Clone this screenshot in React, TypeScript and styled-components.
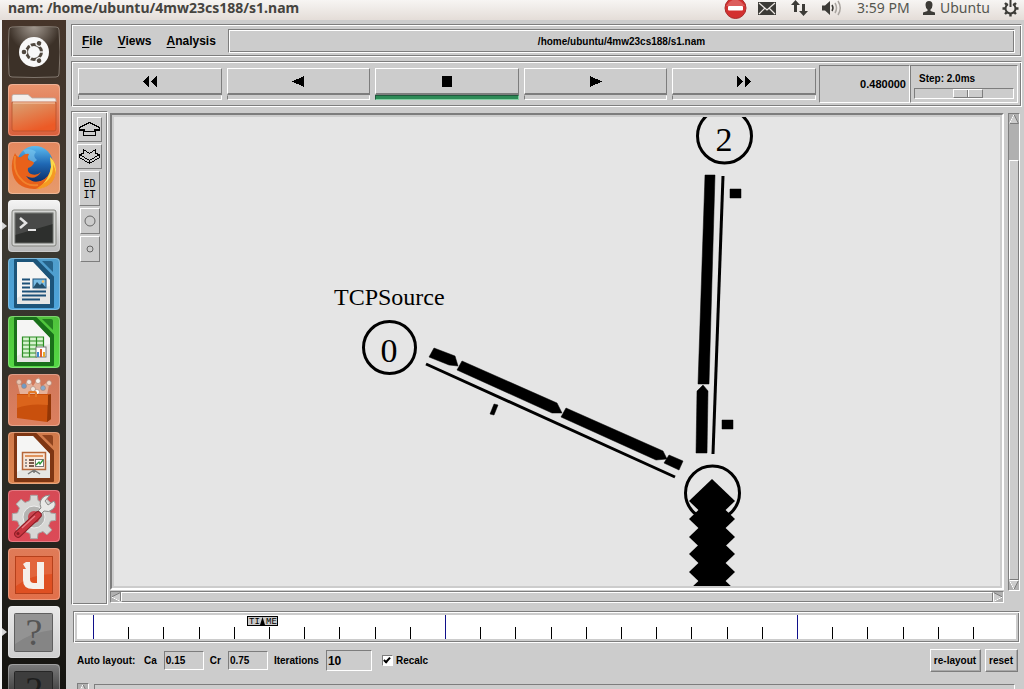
import React, { useState } from "react";
import styled, { createGlobalStyle, css } from "styled-components";

const face = "#cccccc";
const dark = "#7d7d7d";
const light = "#ffffff";

const GlobalStyle = createGlobalStyle`
  *, *::before, *::after { box-sizing: border-box; }
  body { margin: 0; background: ${face}; font-family: "Liberation Sans", Arial, sans-serif; color: #000; }
  button, input { font: inherit; color: inherit; margin: 0; padding: 0; border-radius: 0; appearance: none; background: none; border: 0; }
  svg { display: block; }
`;

const groove = css`
  border: 1px solid;
  border-color: ${dark} ${light} ${light} ${dark};
  box-shadow: inset 1px 1px 0 ${light}, inset -1px -1px 0 ${dark};
`;
const sunken = css`
  border: 1px solid;
  border-color: ${dark} ${light} ${light} ${dark};
`;
const raised = css`
  border: 1px solid;
  border-color: ${light} ${dark} ${dark} ${light};
`;

const Desktop = styled.div`
  display: flex;
  flex-direction: column;
  height: 100vh;
  overflow: hidden;
  background: ${face};
`;

const TopPanel = styled.header`
  display: flex;
  flex: 0 0 20px;
  min-height: 0;
  align-items: center;
  justify-content: space-between;
  padding: 0 5px 4px 8px;
  background: linear-gradient(#f7f5f3, #e4ddd8);
  color: #45443f;
  font-family: "Noto Sans", sans-serif;
  line-height: 16px;
`;

const WindowTitle = styled.h1`
  margin: 0;
  font-size: 14px;
  line-height: 16px;
  font-weight: 700;
  white-space: nowrap;
`;

const Indicators = styled.div`
  display: flex;
  align-items: center;
  height: 16px;
  font-size: 14px;
  color: #55564f;
`;

const Indicator = styled.div<{ $w: number }>`
  display: flex;
  align-items: center;
  gap: 4px;
  width: ${(p) => p.$w}px;
  height: 16px;
  white-space: nowrap;
`;

const Body = styled.div`
  display: flex;
  flex: 1;
  min-height: 0;
  border-left: 2px solid #f4f4f4;
`;

const Launcher = styled.nav`
  display: flex;
  flex: 0 0 64px;
  flex-direction: column;
  gap: 6px;
  padding: 6px 0 0;
  overflow: hidden;
  background: linear-gradient(#46352a, #3b3830 35%, #2c2a24 70%, #14130f);
`;

const LauncherItem = styled.button<{ $running?: boolean }>`
  display: flex;
  flex: 0 0 52px;
  align-items: center;
  &::before {
    content: "";
    width: 6px;
    border: 4px solid transparent;
    border-width: 4px 0 4px 5px;
    border-left-color: ${(p) => (p.$running ? "#d8d8d8" : "transparent")};
  }
`;

const Main = styled.main`
  display: flex;
  flex: 1;
  flex-direction: column;
  min-width: 0;
  padding: 4px 2px 0 5px;
  font-size: 10px;
  font-weight: 700;
`;

const MenuBar = styled.div`
  ${groove}
  display: flex;
  flex: 0 0 33px;
  align-items: stretch;
  padding: 4px 6px 3px 2px;
`;

const Menus = styled.nav`
  display: flex;
  flex: 0 0 154px;
  align-items: center;
  gap: 1px;
  padding-left: 1px;
`;

const MenuButton = styled.button`
  padding: 0 7px;
  font-size: 12px;
  line-height: 16px;
  &::first-letter { text-decoration: underline; text-underline-offset: 2px; }
`;

const PathBox = styled.div`
  ${groove}
  display: flex;
  flex: 1;
  align-items: center;
  justify-content: center;
`;

const Toolbar = styled.div`
  ${groove}
  display: flex;
  flex: 0 0 46px;
  margin-top: 4px;
  padding: 3px 3px 3px 6px;
`;

const Transport = styled.div`
  display: flex;
  flex: 1;
  gap: 5px;
  padding: 3px 3px 3px 0;
`;

const PlayButton = styled.button<{ $active?: boolean }>`
  display: flex;
  flex: 1;
  flex-direction: column;
  &::after {
    content: "";
    flex: 0 0 5px;
    align-self: stretch;
    border: 1px solid;
    border-color: ${(p) => (p.$active ? "#1e5a3c #86cfa4 #86cfa4 #1e5a3c" : `${face} ${light} ${light} ${dark}`)};
    background: ${(p) => (p.$active ? "#2e8b57" : face)};
  }
`;

const PlayFace = styled.span`
  ${raised}
  display: flex;
  flex: 1;
  align-self: stretch;
  align-items: center;
  justify-content: center;
  border-bottom-width: 2px;
`;

const TimeBox = styled.output`
  ${sunken}
  display: flex;
  flex: 0 0 91px;
  align-items: center;
  justify-content: flex-end;
  padding-right: 3px;
  font-size: 11px;
`;

const StepBox = styled.label`
  ${sunken}
  display: flex;
  flex: 0 0 108px;
  flex-direction: column;
  padding: 7px 3px 0;
  line-height: 12px;
  span { padding-left: 5px; }
`;

const StepSlider = styled.input`
  ${sunken}
  width: 100%;
  height: 11px;
  margin-top: 3px;
  &::-webkit-slider-thumb {
    appearance: none;
    width: 30px;
    height: 9px;
    border: 1px solid;
    border-color: ${light} ${dark} ${dark} ${light};
    background: linear-gradient(90deg, ${face} 13px, ${dark} 13px 14px, ${light} 14px 15px, ${face} 15px);
  }
`;

const Workspace = styled.div`
  display: flex;
  flex: 1;
  min-height: 0;
  margin-top: 4px;
`;

const ToolPalette = styled.div`
  ${groove}
  display: flex;
  flex: 0 0 37px;
  flex-direction: column;
  align-items: center;
  gap: 2px;
  padding-top: 5px;
`;

const Tool = styled.button<{ $w: number; $h: number }>`
  ${raised}
  display: flex;
  align-items: center;
  justify-content: center;
  width: ${(p) => p.$w}px;
  height: ${(p) => p.$h}px;
  font-family: "DejaVu Sans Mono", monospace;
  font-size: 10px;
  font-weight: 400;
  line-height: 11px;
  white-space: pre;
`;

const ViewColumn = styled.div`
  display: flex;
  flex: 1;
  flex-direction: column;
  gap: 1px;
  min-width: 0;
  padding: 2px 4px 2px 2px;
`;

const CanvasFrame = styled.div`
  flex: 1;
  min-height: 0;
  padding: 2px;
  border: 2px solid;
  border-color: ${dark} ${light} ${light} ${dark};
`;

const Scene = styled.svg`
  width: 100%;
  height: 100%;
  background: #e5e5e5;
  font-family: "Liberation Serif", "Times New Roman", serif;
  font-weight: 400;
`;

const ScrollBar = styled.div<{ $vertical?: boolean }>`
  ${sunken}
  display: flex;
  flex: 0 0 12px;
  flex-direction: ${(p) => (p.$vertical ? "column" : "row")};
  margin: ${(p) => (p.$vertical ? "2px 2px 14px 0" : "0")};
  background: #b0b0b0;
`;

const ScrollArrow = styled.button`
  flex: 0 0 10px;
`;

const ScrollThumb = styled.div<{ $size: number }>`
  ${raised}
  flex: ${(p) => p.$size};
  background: ${face};
`;

const Trough = styled.div`
  flex: 8;
`;

const Timeline = styled.div`
  ${groove}
  flex: 0 0 32px;
  margin: 6px 2px 0;
  padding: 3px;
`;

const TimeScale = styled.svg`
  width: 100%;
  height: 24px;
  background: #fff;
  font-family: "Liberation Mono", monospace;
  font-weight: 400;
`;

const LayoutForm = styled.form`
  display: flex;
  flex: 0 0 40px;
  align-items: center;
  padding: 0 4px 5px 6px;
  line-height: 12px;
`;

const FormTitle = styled.span`
  width: 67px;
`;

const Field = styled.label`
  display: flex;
  align-items: center;
  gap: 7px;
  margin-right: 6px;
`;

const Entry = styled.input<{ $large?: boolean }>`
  ${sunken}
  width: ${(p) => (p.$large ? 46 : 40)}px;
  height: ${(p) => (p.$large ? 21 : 19)}px;
  padding-left: 1px;
  font-size: ${(p) => (p.$large ? 12 : 10)}px;
`;

const Recalc = styled.label`
  display: flex;
  align-items: center;
  gap: 3px;
  margin-left: 4px;
`;

const Tick = styled.input`
  ${sunken}
  display: grid;
  place-items: center;
  width: 11px;
  height: 11px;
  background: #fff;
  &:checked::after {
    content: "";
    width: 4px;
    height: 7px;
    border: solid #000;
    border-width: 0 2px 2px 0;
    transform: rotate(42deg);
    margin-bottom: 2px;
  }
`;

const FormActions = styled.div`
  display: flex;
  gap: 4px;
  margin-left: auto;
`;

const FormButton = styled.button`
  ${raised}
  height: 23px;
  padding: 0 4px 0 3px;
  box-shadow: inset -1px -1px 0 #a8a8a8;
`;

const Footer = styled.div`
  display: flex;
  flex: 0 0 6px;
  align-items: flex-start;
  gap: 5px;
  padding: 0 7px 0 6px;
  overflow: hidden;
`;

const FooterArrow = styled.button`
  ${sunken}
  width: 12px;
  height: 12px;
  background: #b0b0b0;
`;

const FooterPane = styled.div`
  ${sunken}
  flex: 1;
  height: 20px;
  margin-top: 1px;
`;

function Triangle({ dir }: { dir: "up" | "down" | "left" | "right" }) {
  const turn = { up: 0, right: 90, down: 180, left: 270 }[dir];
  const flip = dir === "right" || dir === "down";
  return (
    <svg width="10" height="10" viewBox="0 0 10 10">
      <g transform={`rotate(${turn} 5 5)`} fill="none">
        <path d="M5 0.5 L9.5 9.5 H0.5 Z" fill={face} stroke={dark} />
        <path d={flip ? "M5 0.5 L9.5 9.5 H0.5" : "M0.5 9.5 L5 0.5"} stroke={light} />
      </g>
    </svg>
  );
}

const tile = (id: string, top: string, bottom: string) => (
  <>
    <defs>
      <linearGradient id={id} x2="0" y2="1">
        <stop offset="0" stopColor={top} />
        <stop offset="1" stopColor={bottom} />
      </linearGradient>
    </defs>
    <rect width="52" height="52" rx="4" fill={`url(#${id})`} />
    <rect x="0.5" y="0.5" width="51" height="51" rx="4" fill="none" stroke="#fff" strokeOpacity="0.28" />
  </>
);

function DocShape({ edge }: { edge: string }) {
  return (
    <>
      <path d="M7 2 H28 L45 19 V49 H7 Z" fill={edge} stroke={edge} strokeWidth="2" strokeLinejoin="round" />
      <path d="M34 3 H43 Q45 3 45 5 V14 Z" fill={edge} opacity="0.8" />
      <path d="M9 4 H25 L42 22 V46 H9 Z" fill="#e6e6e4" />
      <path d="M9 4 H25 L42 22 V28 Q26 30 9 40 Z" fill="#fff" opacity="0.6" />
    </>
  );
}

const gearPath = (cx: number, cy: number, outer: number, inner: number, teeth: number) => {
  const pts: string[] = [];
  for (let i = 0; i < teeth; i++) {
    [[-0.3, inner], [-0.2, outer], [0.2, outer], [0.3, inner]].forEach(([o, r]) => {
      const a = ((i + o) / teeth) * Math.PI * 2 - Math.PI / 2;
      pts.push(`${(cx + r * Math.cos(a)).toFixed(1)} ${(cy + r * Math.sin(a)).toFixed(1)}`);
    });
  }
  return `M${pts.join("L")}Z`;
};

const launcherIcons: { name: string; running?: boolean; art: React.ReactNode }[] = [
  {
    name: "Dash",
    art: (
      <>
        <defs>
          <radialGradient id="dash" cy="0"><stop offset="0" stopColor="#a39a91" /><stop offset="1" stopColor="#3c3128" /></radialGradient>
        </defs>
        <path d="M4 1 Q26 -1 48 1 Q51 1 51 4 Q53 26 51 48 Q51 51 48 51 Q26 52 4 51 Q1 51 1 48 Q-1 26 1 4 Q1 1 4 1Z" fill="url(#dash)" stroke="#81776e" />
        <circle cx="26" cy="26" r="15" fill="#f8f8f8" />
        <circle cx="26" cy="26" r="7.5" fill="none" stroke="#50483f" strokeWidth="3" />
        {[0, 120, 240].map((a) => (
          <path key={a} d="M31 26 H36" stroke="#f8f8f8" strokeWidth="1.4" transform={`rotate(${a} 26 26)`} />
        ))}
        {[180, 300, 60].map((a) => (
          <g key={a} transform={`rotate(${a} 26 26)`}>
            <circle cx="36" cy="26" r="3.4" fill="#f8f8f8" />
            <circle cx="36" cy="26" r="2.3" fill="#50483f" />
          </g>
        ))}
      </>
    ),
  },
  {
    name: "Files",
    art: (
      <>
        {tile("files", "#e8946e", "#d95f3b")}
        <path d="M4 19 V12 Q4 10.5 6 10.5 H20 L24 14 H46 Q48 14 48 16 V19 Z" fill="#f3efec" stroke="#b9aaa2" strokeWidth="0.8" />
        <defs><linearGradient id="folder" x2="0.5" y2="1"><stop offset="0" stopColor="#d9a375" /><stop offset="1" stopColor="#ec5a26" /></linearGradient></defs>
        <path d="M4 18 H48 V45 Q48 47 46 47 H6 Q4 47 4 45 Z" fill="url(#folder)" stroke="#b9502c" strokeWidth="0.8" />
        <path d="M5 19 H47" stroke="#f9cbae" />
      </>
    ),
  },
  {
    name: "Firefox",
    art: (
      <>
        {tile("ff", "#e3885e", "#e79a6c")}
        <defs><linearGradient id="globe" x2="0" y2="1"><stop offset="0" stopColor="#5cbcf0" /><stop offset="0.5" stopColor="#1f68b4" /><stop offset="1" stopColor="#0d2f68" /></linearGradient></defs>
        <circle cx="27" cy="22" r="18" fill="url(#globe)" />
        <path d="M15 8 Q24 6 28 10 Q24 14 29 18 L24 22 Z" fill="#84cdf2" opacity="0.55" />
        <path d="M7 11 Q9 16 13 15 Q17 11 21 12 Q19 15 20 18 Q25 19 26 21 Q24 25 20 26 Q19 30 23 32 Q29 34 33 30 Q27 39 18 34 Q24 42 33 39 Q42 35 43 25 Q44 20 42 15 Q48 20 48 28 Q46 47 26 47 Q6 46 4 28 Q3 19 7 11Z" fill="#e8611a" />
        <path d="M42 15 Q48 20 48 28 Q46 44 30 47 Q41 38 43 25Z" fill="#fbd84a" />
        <path d="M39 39 Q46 33 45 22 Q50 31 44 40 Q37 47 28 47Z" fill="#f59a23" />
        <path d="M7 14 Q5 29 12 36 Q19 45 30 43" fill="none" stroke="#f79a3b" strokeWidth="2" opacity="0.6" />
      </>
    ),
  },
  {
    name: "Terminal",
    running: true,
    art: (
      <>
        {tile("term", "#f4f4f4", "#b9b9b9")}
        <rect x="4" y="10" width="44" height="36" rx="2" fill="#d3d4d2" stroke="#83847f" />
        <rect x="7" y="13" width="38" height="30" fill="#2d2f2d" stroke="#676965" />
        <path d="M7 13 H45 V24 L7 35 Z" fill="#fff" opacity="0.13" />
        <path d="M12 18 L18 23 L12 28" fill="none" stroke="#e4e4e4" strokeWidth="2.5" />
        <path d="M20 30 H28" stroke="#e4e4e4" strokeWidth="2" />
      </>
    ),
  },
  {
    name: "Writer",
    art: (
      <>
        {tile("writer", "#4f9dcb", "#4da4db")}
        <DocShape edge="#1c5479" />
        <path d="M14 21.5 H22 M14 25.5 H22 M14 29.5 H22 M14 33.5 H38 M14 37.5 H38 M14 41.5 H32" stroke="#1d5178" strokeWidth="2" />
        <rect x="25" y="21" width="13" height="9" fill="#79bce4" stroke="#1d5178" />
        <path d="M25 30 L29 24 L32 27 L34 25 L38 30Z" fill="#25516d" />
        <circle cx="35" cy="23.5" r="1.3" fill="#f7c26a" />
      </>
    ),
  },
  {
    name: "Calc",
    art: (
      <>
        {tile("calc", "#4fc23b", "#54d844")}
        <DocShape edge="#19701a" />
        <rect x="14" y="21" width="22" height="20" fill="#d6f3cf" />
        <path d="M14.5 20.5 V41 M21.5 20.5 V41 M28.5 20.5 V41 M35.5 20.5 V32 M14 21 H36 M14 25 H36 M14 29 H36 M14 33 H29 M14 37 H29 M14 41 H29" stroke="#2b8d23" strokeWidth="1.2" />
        <rect x="28" y="31" width="10" height="10" fill="#fff" stroke="#777" />
        <path d="M30 36 V41" stroke="#3c8bd0" strokeWidth="2" />
        <path d="M33 33 V41" stroke="#e0602b" strokeWidth="2" />
        <path d="M36 36 V41" stroke="#e9a928" strokeWidth="2" />
      </>
    ),
  },
  {
    name: "Software Centre",
    art: (
      <>
        {tile("shop", "#cf775a", "#dc805f")}
        <path d="M12 20 L9 8 L16 13 L20 5 L25 12 L31 3 L33 13 L42 6 L39 21 Z" fill="#f1d5c2" opacity="0.6" />
        {[[16, 12, "#6e9cc8"], [25, 15, "#efe7df"], [30, 7, "#f7f1ec"], [35, 14, "#86aacb"], [21, 8, "#efe5df"], [41, 9, "#f3d9c9"], [11, 8, "#e9c3ae"], [29, 18, "#fff"]].map(([x, y, c]) => (
          <circle key={`${x}-${y}`} cx={x} cy={y} r="2.5" fill={c as string} stroke="#a9806e" strokeWidth="0.6" />
        ))}
        <path d="M9 20 L43 20 V45 L39 48 L9 44 Z" fill="#c9500d" />
        <path d="M40 21 L43 20 V45 L39 48Z" fill="#913606" />
        <path d="M9 21 H40 V31 Q22 29 9 34Z" fill="#ea7528" opacity="0.55" />
        <path d="M21 23 V19 Q21 18 22 18 H27 Q28 18 28 19 V23" fill="none" stroke="#e27927" strokeWidth="2" />
      </>
    ),
  },
  {
    name: "Impress",
    art: (
      <>
        {tile("impress", "#d07a4b", "#dd8550")}
        <DocShape edge="#7e3613" />
        <rect x="14.5" y="20.5" width="23" height="17" fill="#f8e6d8" stroke="#b5673a" strokeWidth="1.5" />
        <path d="M17 28 H19 M17 31 H19 M17 34 H19" stroke="#777" strokeWidth="1.6" />
        <path d="M21 28 H26 M21 31 H26 M21 34 H26" stroke="#4d2b1a" strokeWidth="1.6" />
        <path d="M17 24 H35" stroke="#e0945e" strokeWidth="2" />
        <rect x="27.5" y="27.5" width="8" height="7" fill="#fff" stroke="#777" />
        <path d="M28 33 L31 30 L32 32 L35 28" fill="none" stroke="#2b9634" strokeWidth="1.3" />
        <path d="M26 38 L20 42 M26 38 L32 42 M26 38 V41" stroke="#777" strokeWidth="1.5" />
      </>
    ),
  },
  {
    name: "System Settings",
    art: (
      <>
        {tile("settings", "#d64a55", "#dc4a57")}
        <path d={gearPath(26, 27, 22, 17, 8)} fill="#d7d7d5" stroke="#a7a7a5" strokeLinejoin="round" />
        <circle cx="26" cy="27" r="11" fill="#b4b4b2" stroke="#eee" />
        <circle cx="26" cy="27" r="6" fill="#ca4651" />
        <path d="M27 24 L33 18 Q30 10 37 6 L42 5 L37 11 L40 15 L46 11 Q49 15 45 19 Q41 23 36 21 L30 27Z" fill="#e8e8e6" stroke="#8b8b89" />
        <path d="M30 25 L10 44" stroke="#891c24" strokeWidth="7.5" strokeLinecap="round" />
        <path d="M30 25 L10 44" stroke="#c93641" strokeWidth="5.5" strokeLinecap="round" />
        <path d="M27 26 L14 38" stroke="#e98088" strokeWidth="1.2" />
        <circle cx="10" cy="43.5" r="1.5" fill="#891c24" />
      </>
    ),
  },
  {
    name: "Ubuntu One",
    art: (
      <>
        {tile("one", "#df7b58", "#e2704a")}
        <rect x="7.5" y="8.5" width="37" height="37" fill="#df5022" stroke="#b5401b" />
        <path d="M8 9 H44 V26 Q24 26 8 38Z" fill="#fff" opacity="0.12" />
        <path d="M15 16 L18 14 H22 V31 Q22 35 26 35 H29 V14 H36 V41 H25 Q15 41 15 32 V21 L18 21 Z" fill="#f5efea" />
      </>
    ),
  },
  {
    name: "Network Animator",
    running: true,
    art: (
      <>
        {tile("unk1", "#e9e9e9", "#cfcfcf")}
        <rect x="6.5" y="7.5" width="38" height="38" rx="1" fill="#858585" stroke="#5f5f5f" />
        <path d="M7 8 H44 V24 Q24 26 7 38Z" fill="#fff" opacity="0.12" />
        <text x="26" y="39" textAnchor="middle" fontFamily="Liberation Serif, serif" fontSize="38" fill="#555">?</text>
      </>
    ),
  },
  {
    name: "Unknown application",
    art: (
      <>
        {tile("unk2", "#7c7c7c", "#111")}
        <rect x="6.5" y="7.5" width="38" height="38" rx="1" fill="#3d3d3d" stroke="#262626" />
        <text x="26" y="39" textAnchor="middle" fontFamily="Liberation Serif, serif" fontSize="38" fill="#1d1d1d">?</text>
      </>
    ),
  },
];

const playIcons = [
  { name: "Rewind", art: <path d="M6 0 V11 L0 5.5Z M14 0 V11 L8 5.5Z" /> },
  { name: "Play backward", art: <path d="M13 0 V11 L1 5.5Z" /> },
  { name: "Stop", art: <path d="M2 0 H12 V11 H2Z" /> },
  { name: "Play forward", art: <path d="M1 0 V11 L13 5.5Z" /> },
  { name: "Fast forward", art: <path d="M0 0 V11 L6 5.5Z M8 0 V11 L14 5.5Z" /> },
];

const packets = [
  "320,231 341,239 344,249 335,248 315,240",
  "348,244 443,286 448,296 438,296 343,253",
  "452,291 549,334 553,342 542,343 447,300",
  "555,338 569,344 565,353 550,346",
  "380,287 384,288 380,298 376,297",
  "591,58 601,58 595,267 584,267",
  "589,268 594,274 593,336 582,336 583,274",
  "616,72 627,72 627,81 616,81",
  "608,303 619,303 619,312 608,312",
];
const queue = [384, 402, 420, 437, 455, 473];

function NetworkScene() {
  return (
    <Scene role="img" aria-label="Network topology">
      <g fill="none" stroke="#000" strokeWidth="3">
        <circle cx="275.5" cy="230.5" r="26" />
        <circle cx="610.5" cy="19" r="27" />
        <circle cx="598.5" cy="376" r="27" />
        <path d="M312 247 L561 360" />
        <path d="M609 59 L599 337" />
      </g>
      {packets.map((p) => <polygon key={p} points={p} stroke="#000" strokeWidth="0.5" />)}
      {queue.map((y) => <path key={y} d={`M598 ${y - 22} L621 ${y} L598 ${y + 22} L575 ${y}Z`} />)}
      <text x="220" y="188" fontSize="24">TCPSource</text>
      <text x="275" y="245" fontSize="34" textAnchor="middle">0</text>
      <text x="610" y="34" fontSize="34" textAnchor="middle">2</text>
    </Scene>
  );
}

function TimeRuler() {
  return (
    <TimeScale role="img" aria-label="Time">
      {Array.from({ length: 26 }, (_, i) => {
        const major = i % 10 === 0;
        return <rect key={i} x={16 + Math.round(i * 35.2)} y={major ? 0 : 12} width="1" height={major ? 24 : 12} fill={major ? "#10108a" : "#000"} />;
      })}
      <rect x="170.5" y="1.5" width="30" height="9" fill="#c8c8c8" stroke="#000" />
      <text x="172" y="9" fontSize="9">TI</text>
      <text x="189" y="9" fontSize="9">ME</text>
      <path d="M185.5 2 L188 10 H183Z" />
    </TimeScale>
  );
}

export default function App() {
  const [active, setActive] = useState("Stop");
  const [step, setStep] = useState(56);
  return (
    <Desktop>
      <GlobalStyle />
      <TopPanel>
        <WindowTitle>nam: /home/ubuntu/4mw23cs188/s1.nam</WindowTitle>
        <Indicators>
          <Indicator $w={34}>
            <svg width="23" height="22" viewBox="0 0 23 22">
              <circle cx="11.5" cy="11" r="10.5" fill="#d3302f" stroke="#a92d2d" />
              <path d="M2 9 Q11 -4 21 9Z" fill="#fff" opacity="0.22" />
              <rect x="4" y="9" width="15" height="4.5" rx="1" fill="#fff" />
            </svg>
          </Indicator>
          <Indicator $w={33}>
            <svg width="18" height="13" viewBox="0 0 18 13">
              <rect width="18" height="13" fill="#3c3b37" />
              <path d="M1 1 L9 8 L17 1 M1 12 L6.5 6.5 M17 12 L11.5 6.5" stroke="#eee9e5" fill="none" strokeWidth="1.2" />
            </svg>
          </Indicator>
          <Indicator $w={31}>
            <svg width="17" height="16" viewBox="0 0 17 16" fill="#3c3b37">
              <path d="M4.5 0 L9 5 H6 V12 H3 V5 H0Z M12.5 16 L17 11 H14 V4 H11 V11 H8Z" />
            </svg>
          </Indicator>
          <Indicator $w={35}>
            <svg width="20" height="16" viewBox="0 0 20 16" fill="none" strokeWidth="1.5">
              <path d="M0 5.5 H3 L8 1 V15 L3 10.5 H0Z" fill="#3c3b37" />
              <path d="M10 5 Q12 8 10 11" stroke="#3c3b37" />
              <path d="M13 3 Q16 8 13 13 M16 1 Q20.5 8 16 15" stroke="#aaa5a0" />
            </svg>
          </Indicator>
          <Indicator $w={65}>3:59 PM</Indicator>
          <Indicator $w={80}>
            <svg width="14" height="14" viewBox="0 0 14 14" fill="#3c3b37">
              <path d="M7 0 Q10.5 0 10.5 4 Q10.5 7 8.5 8.5 V10 L13 11.5 V14 H1 V11.5 L5.5 10 V8.5 Q3.5 7 3.5 4 Q3.5 0 7 0Z" />
            </svg>
            Ubuntu
          </Indicator>
          <svg width="17" height="17" viewBox="0 0 17 17" fill="none" stroke="#3c3b37">
            <path d="M6 4.2 A5 5 0 1 0 11 4.2" strokeWidth="2" />
            <path d="M8.5 0 V7" strokeWidth="2" />
            <path d="M3 3 L4.7 4.7 M14 3 L12.3 4.7 M0.5 8.5 H3.5 M13.5 8.5 H16.5 M3 14 L4.7 12.3 M14 14 L12.3 12.3 M8.5 13.5 V16.5" strokeWidth="2.4" />
          </svg>
        </Indicators>
      </TopPanel>
      <Body>
        <Launcher aria-label="Launcher">
          {launcherIcons.map((item) => (
            <LauncherItem key={item.name} type="button" aria-label={item.name} $running={item.running}>
              <svg width="52" height="52" viewBox="0 0 52 52">{item.art}</svg>
            </LauncherItem>
          ))}
        </Launcher>
        <Main>
          <MenuBar>
            <Menus>
              <MenuButton type="button">File</MenuButton>
              <MenuButton type="button">Views</MenuButton>
              <MenuButton type="button">Analysis</MenuButton>
            </Menus>
            <PathBox>/home/ubuntu/4mw23cs188/s1.nam</PathBox>
          </MenuBar>
          <Toolbar>
            <Transport>
              {playIcons.map((b) => (
                <PlayButton key={b.name} type="button" aria-label={b.name} $active={active === b.name} onClick={() => setActive(b.name)}>
                  <PlayFace><svg width="14" height="11" viewBox="0 0 14 11" shapeRendering="crispEdges">{b.art}</svg></PlayFace>
                </PlayButton>
              ))}
            </Transport>
            <TimeBox>0.480000</TimeBox>
            <StepBox>
              <span>Step: 2.0ms</span>
              <StepSlider type="range" value={step} onChange={(e) => setStep(Number(e.target.value))} />
            </StepBox>
          </Toolbar>
          <Workspace>
            <ToolPalette>
              <Tool type="button" aria-label="Zoom in" $w={25} $h={25}>
                <svg width="21" height="15" viewBox="0 0 21 15" fill="none" stroke="#000" shapeRendering="crispEdges">
                  <path d="M10.5 0.5 L0.5 5.5 V8.5 H4.5 V13.5 H16.5 V8.5 H20.5 V5.5Z M0.5 7.5 H5.5 V9.5 H15.5 V7.5 H20.5" />
                </svg>
              </Tool>
              <Tool type="button" aria-label="Zoom out" $w={25} $h={25}>
                <svg width="21" height="15" viewBox="0 0 21 15" fill="none" stroke="#000" shapeRendering="crispEdges">
                  <path d="M4.5 0.5 V4.5 L0.5 5.5 V8.5 L10.5 14.5 L20.5 8.5 V5.5 L16.5 4.5 V0.5 L10.5 4.5Z M0.5 5.5 L10.5 11.5 L20.5 5.5 M10.5 11.5 V14.5" />
                </svg>
              </Tool>
              <Tool type="button" aria-label="Edit" $w={21} $h={35}>{"ED\nIT"}</Tool>
              <Tool type="button" aria-label="Larger nodes" $w={20} $h={26}>
                <svg width="12" height="12" viewBox="0 0 12 12"><circle cx="6" cy="6" r="5" fill="none" stroke="#666" /></svg>
              </Tool>
              <Tool type="button" aria-label="Smaller nodes" $w={20} $h={26}>
                <svg width="8" height="8" viewBox="0 0 8 8"><circle cx="4" cy="4" r="3" fill="none" stroke="#666" /></svg>
              </Tool>
            </ToolPalette>
            <ViewColumn>
              <CanvasFrame><NetworkScene /></CanvasFrame>
              <ScrollBar>
                <ScrollArrow type="button" aria-label="Scroll left"><Triangle dir="left" /></ScrollArrow>
                <ScrollThumb $size={1} />
                <ScrollArrow type="button" aria-label="Scroll right"><Triangle dir="right" /></ScrollArrow>
              </ScrollBar>
            </ViewColumn>
            <ScrollBar $vertical>
              <ScrollArrow type="button" aria-label="Scroll up"><Triangle dir="up" /></ScrollArrow>
              <Trough />
              <ScrollThumb $size={92} />
              <ScrollArrow type="button" aria-label="Scroll down"><Triangle dir="down" /></ScrollArrow>
            </ScrollBar>
          </Workspace>
          <Timeline><TimeRuler /></Timeline>
          <LayoutForm onSubmit={(e) => e.preventDefault()}>
            <FormTitle>Auto layout:</FormTitle>
            <Field>Ca<Entry defaultValue="0.15" /></Field>
            <Field>Cr<Entry defaultValue="0.75" /></Field>
            <Field>Iterations<Entry $large defaultValue="10" /></Field>
            <Recalc><Tick type="checkbox" defaultChecked />Recalc</Recalc>
            <FormActions>
              <FormButton type="submit">re-layout</FormButton>
              <FormButton type="reset">reset</FormButton>
            </FormActions>
          </LayoutForm>
          <Footer>
            <FooterArrow type="button" aria-label="Scroll up"><Triangle dir="up" /></FooterArrow>
            <FooterPane />
          </Footer>
        </Main>
      </Body>
    </Desktop>
  );
}
